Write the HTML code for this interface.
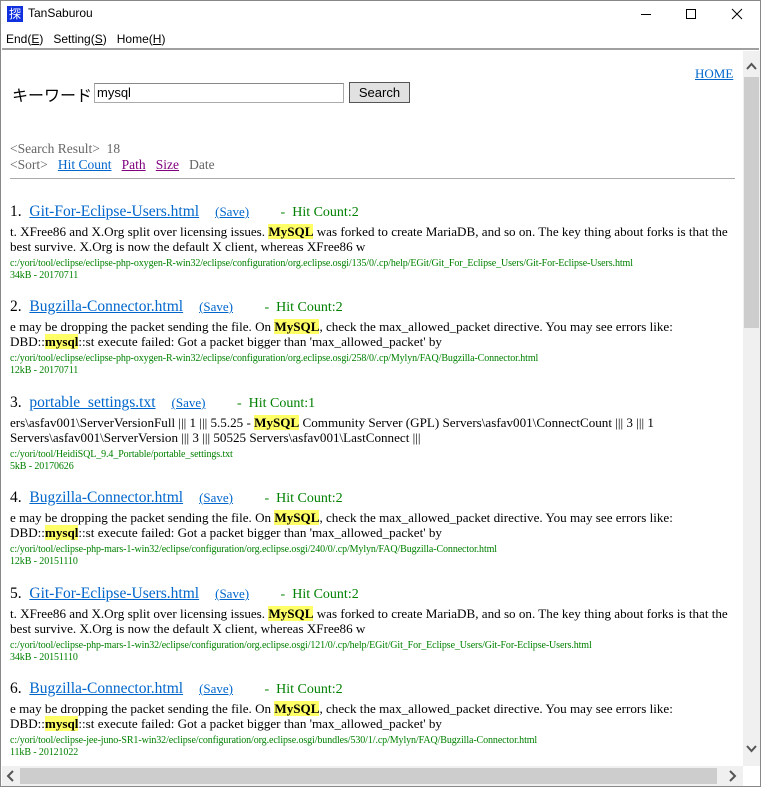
<!DOCTYPE html>
<html><head><meta charset="utf-8"><style>
*{margin:0;padding:0;box-sizing:border-box}
body{width:761px;height:787px;overflow:hidden;background:#fff;position:relative;font-family:"Liberation Serif",serif;}
.abs{position:absolute;white-space:nowrap}
.ui{font-family:"Liberation Sans","Noto Sans CJK JP",sans-serif}
a{color:#0066cc;text-decoration:underline}
.t{font-size:13.1px;color:#000;line-height:15px}
.hl{background:#ffff66;font-weight:bold}
.p{font-size:10px;color:#008000;line-height:12px;letter-spacing:-0.1px}
.hc{color:#008000;font-size:14px}
</style></head><body>
<div style="position:absolute;left:0;top:0;width:761px;height:787px;border:1px solid #888"></div>
<div class="abs" style="left:7px;top:6px;width:16px;height:16px;background:#1030e0;color:#fff;font-size:12px;line-height:16px;text-align:center;font-family:'Noto Sans CJK JP',sans-serif">探</div>
<div class="abs ui" style="left:28px;top:6px;font-size:12px;color:#000">TanSaburou</div>
<svg class="abs" style="left:630px;top:6px" width="120" height="16"><line x1="11" y1="8.5" x2="21" y2="8.5" stroke="#000"/><rect x="56.5" y="3.5" width="9" height="9" fill="none" stroke="#000"/><path d="M102 3 L112 13 M112 3 L102 13" stroke="#000"/></svg>
<div class="abs ui" style="left:6px;top:32px;font-size:12px;color:#000">End(<u>E</u>)&nbsp;&nbsp;&nbsp;Setting(<u>S</u>)&nbsp;&nbsp;&nbsp;Home(<u>H</u>)</div>
<div style="position:absolute;left:2px;top:48px;width:757px;height:2px;background:#a0a0a0"></div>
<div style="position:absolute;left:743px;top:51px;width:17px;height:715px;background:#f0f0f0"></div>
<div style="position:absolute;left:744px;top:77px;width:15px;height:251px;background:#cdcdcd"></div>
<svg class="abs" style="left:743px;top:60px" width="17" height="12"><path d="M4 9 L8.5 4 L13 9" stroke="#555" stroke-width="2" fill="none"/></svg>
<svg class="abs" style="left:743px;top:743px" width="17" height="12"><path d="M4 3 L8.5 8 L13 3" stroke="#555" stroke-width="2" fill="none"/></svg>
<div style="position:absolute;left:2px;top:766px;width:741px;height:20px;background:#f0f0f0"></div>
<div style="position:absolute;left:20px;top:768px;width:697px;height:16px;background:#cdcdcd"></div>
<svg class="abs" style="left:2px;top:768px" width="17" height="16"><path d="M11 3 L6 8 L11 13" stroke="#555" stroke-width="2" fill="none"/></svg>
<svg class="abs" style="left:724px;top:768px" width="17" height="16"><path d="M6 3 L11 8 L6 13" stroke="#555" stroke-width="2" fill="none"/></svg>

<a class="abs" style="left:695px;top:66px;font-size:13px">HOME</a>
<div class="abs" style="left:12px;top:84px;font-size:16px;font-family:'Noto Sans CJK JP',sans-serif;line-height:20px">キーワード</div>
<div class="abs ui" style="left:94px;top:83px;width:250px;height:20px;border:1px solid #aaa;border-top-color:#888;font-size:13px;padding:1px 2px;line-height:16px">mysql</div>
<div class="abs ui" style="left:349px;top:82px;width:61px;height:21px;border:1px solid #555;background:#e1e1e1;font-size:13px;text-align:center;line-height:19px">Search</div>
<div class="abs" style="left:10px;top:141px;font-size:13.5px;color:#666">&lt;Search Result&gt;&nbsp; 18</div>
<div class="abs" style="left:10px;top:157px;font-size:13.5px;color:#666">&lt;Sort&gt;&nbsp;&nbsp; <a>Hit Count</a>&nbsp;&nbsp; <a style="color:#800080">Path</a>&nbsp;&nbsp; <a style="color:#800080">Size</a>&nbsp;&nbsp; Date</div>
<div style="position:absolute;left:10px;top:178px;width:725px;height:1px;background:#aaa"></div>

<div class="abs" style="left:10px;top:203px"><span style="font-size:15.5px">1.&nbsp; <a>Git-For-Eclipse-Users.html</a></span>&nbsp;&nbsp;&nbsp; <a style="font-size:13px">(Save)</a><span class="hc">&nbsp;&nbsp;&nbsp;&nbsp;&nbsp;&nbsp;&nbsp;&nbsp;&nbsp;-&nbsp; Hit Count:2</span></div>
<div class="abs t" style="left:10px;top:224px">t. XFree86 and X.Org split over licensing issues. <span class="hl">MySQL</span> was forked to create MariaDB, and so on. The key thing about forks is that the<br>best survive. X.Org is now the default X client, whereas XFree86 w</div>
<div class="abs p" style="left:10px;top:258px">c:/yori/tool/eclipse/eclipse-php-oxygen-R-win32/eclipse/configuration/org.eclipse.osgi/135/0/.cp/help/EGit/Git_For_Eclipse_Users/Git-For-Eclipse-Users.html<br>34kB - 20170711</div>

<div class="abs" style="left:10px;top:298px"><span style="font-size:15.5px">2.&nbsp; <a>Bugzilla-Connector.html</a></span>&nbsp;&nbsp;&nbsp; <a style="font-size:13px">(Save)</a><span class="hc">&nbsp;&nbsp;&nbsp;&nbsp;&nbsp;&nbsp;&nbsp;&nbsp;&nbsp;-&nbsp; Hit Count:2</span></div>
<div class="abs t" style="left:10px;top:319px">e may be dropping the packet sending the file. On <span class="hl">MySQL</span>, check the max_allowed_packet directive. You may see errors like:<br>DBD::<span class="hl">mysql</span>::st execute failed: Got a packet bigger than 'max_allowed_packet' by</div>
<div class="abs p" style="left:10px;top:353px">c:/yori/tool/eclipse/eclipse-php-oxygen-R-win32/eclipse/configuration/org.eclipse.osgi/258/0/.cp/Mylyn/FAQ/Bugzilla-Connector.html<br>12kB - 20170711</div>

<div class="abs" style="left:10px;top:394px"><span style="font-size:15.5px">3.&nbsp; <a>portable_settings.txt</a></span>&nbsp;&nbsp;&nbsp; <a style="font-size:13px">(Save)</a><span class="hc">&nbsp;&nbsp;&nbsp;&nbsp;&nbsp;&nbsp;&nbsp;&nbsp;&nbsp;-&nbsp; Hit Count:1</span></div>
<div class="abs t" style="left:10px;top:415px">ers\asfav001\ServerVersionFull ||| 1 ||| 5.5.25 - <span class="hl">MySQL</span> Community Server (GPL) Servers\asfav001\ConnectCount ||| 3 ||| 1<br>Servers\asfav001\ServerVersion ||| 3 ||| 50525 Servers\asfav001\LastConnect |||</div>
<div class="abs p" style="left:10px;top:449px">c:/yori/tool/HeidiSQL_9.4_Portable/portable_settings.txt<br>5kB - 20170626</div>

<div class="abs" style="left:10px;top:489px"><span style="font-size:15.5px">4.&nbsp; <a>Bugzilla-Connector.html</a></span>&nbsp;&nbsp;&nbsp; <a style="font-size:13px">(Save)</a><span class="hc">&nbsp;&nbsp;&nbsp;&nbsp;&nbsp;&nbsp;&nbsp;&nbsp;&nbsp;-&nbsp; Hit Count:2</span></div>
<div class="abs t" style="left:10px;top:510px">e may be dropping the packet sending the file. On <span class="hl">MySQL</span>, check the max_allowed_packet directive. You may see errors like:<br>DBD::<span class="hl">mysql</span>::st execute failed: Got a packet bigger than 'max_allowed_packet' by</div>
<div class="abs p" style="left:10px;top:544px">c:/yori/tool/eclipse-php-mars-1-win32/eclipse/configuration/org.eclipse.osgi/240/0/.cp/Mylyn/FAQ/Bugzilla-Connector.html<br>12kB - 20151110</div>

<div class="abs" style="left:10px;top:585px"><span style="font-size:15.5px">5.&nbsp; <a>Git-For-Eclipse-Users.html</a></span>&nbsp;&nbsp;&nbsp; <a style="font-size:13px">(Save)</a><span class="hc">&nbsp;&nbsp;&nbsp;&nbsp;&nbsp;&nbsp;&nbsp;&nbsp;&nbsp;-&nbsp; Hit Count:2</span></div>
<div class="abs t" style="left:10px;top:606px">t. XFree86 and X.Org split over licensing issues. <span class="hl">MySQL</span> was forked to create MariaDB, and so on. The key thing about forks is that the<br>best survive. X.Org is now the default X client, whereas XFree86 w</div>
<div class="abs p" style="left:10px;top:640px">c:/yori/tool/eclipse-php-mars-1-win32/eclipse/configuration/org.eclipse.osgi/121/0/.cp/help/EGit/Git_For_Eclipse_Users/Git-For-Eclipse-Users.html<br>34kB - 20151110</div>

<div class="abs" style="left:10px;top:680px"><span style="font-size:15.5px">6.&nbsp; <a>Bugzilla-Connector.html</a></span>&nbsp;&nbsp;&nbsp; <a style="font-size:13px">(Save)</a><span class="hc">&nbsp;&nbsp;&nbsp;&nbsp;&nbsp;&nbsp;&nbsp;&nbsp;&nbsp;-&nbsp; Hit Count:2</span></div>
<div class="abs t" style="left:10px;top:701px">e may be dropping the packet sending the file. On <span class="hl">MySQL</span>, check the max_allowed_packet directive. You may see errors like:<br>DBD::<span class="hl">mysql</span>::st execute failed: Got a packet bigger than 'max_allowed_packet' by</div>
<div class="abs p" style="left:10px;top:735px">c:/yori/tool/eclipse-jee-juno-SR1-win32/eclipse/configuration/org.eclipse.osgi/bundles/530/1/.cp/Mylyn/FAQ/Bugzilla-Connector.html<br>11kB - 20121022</div>
</body></html>
